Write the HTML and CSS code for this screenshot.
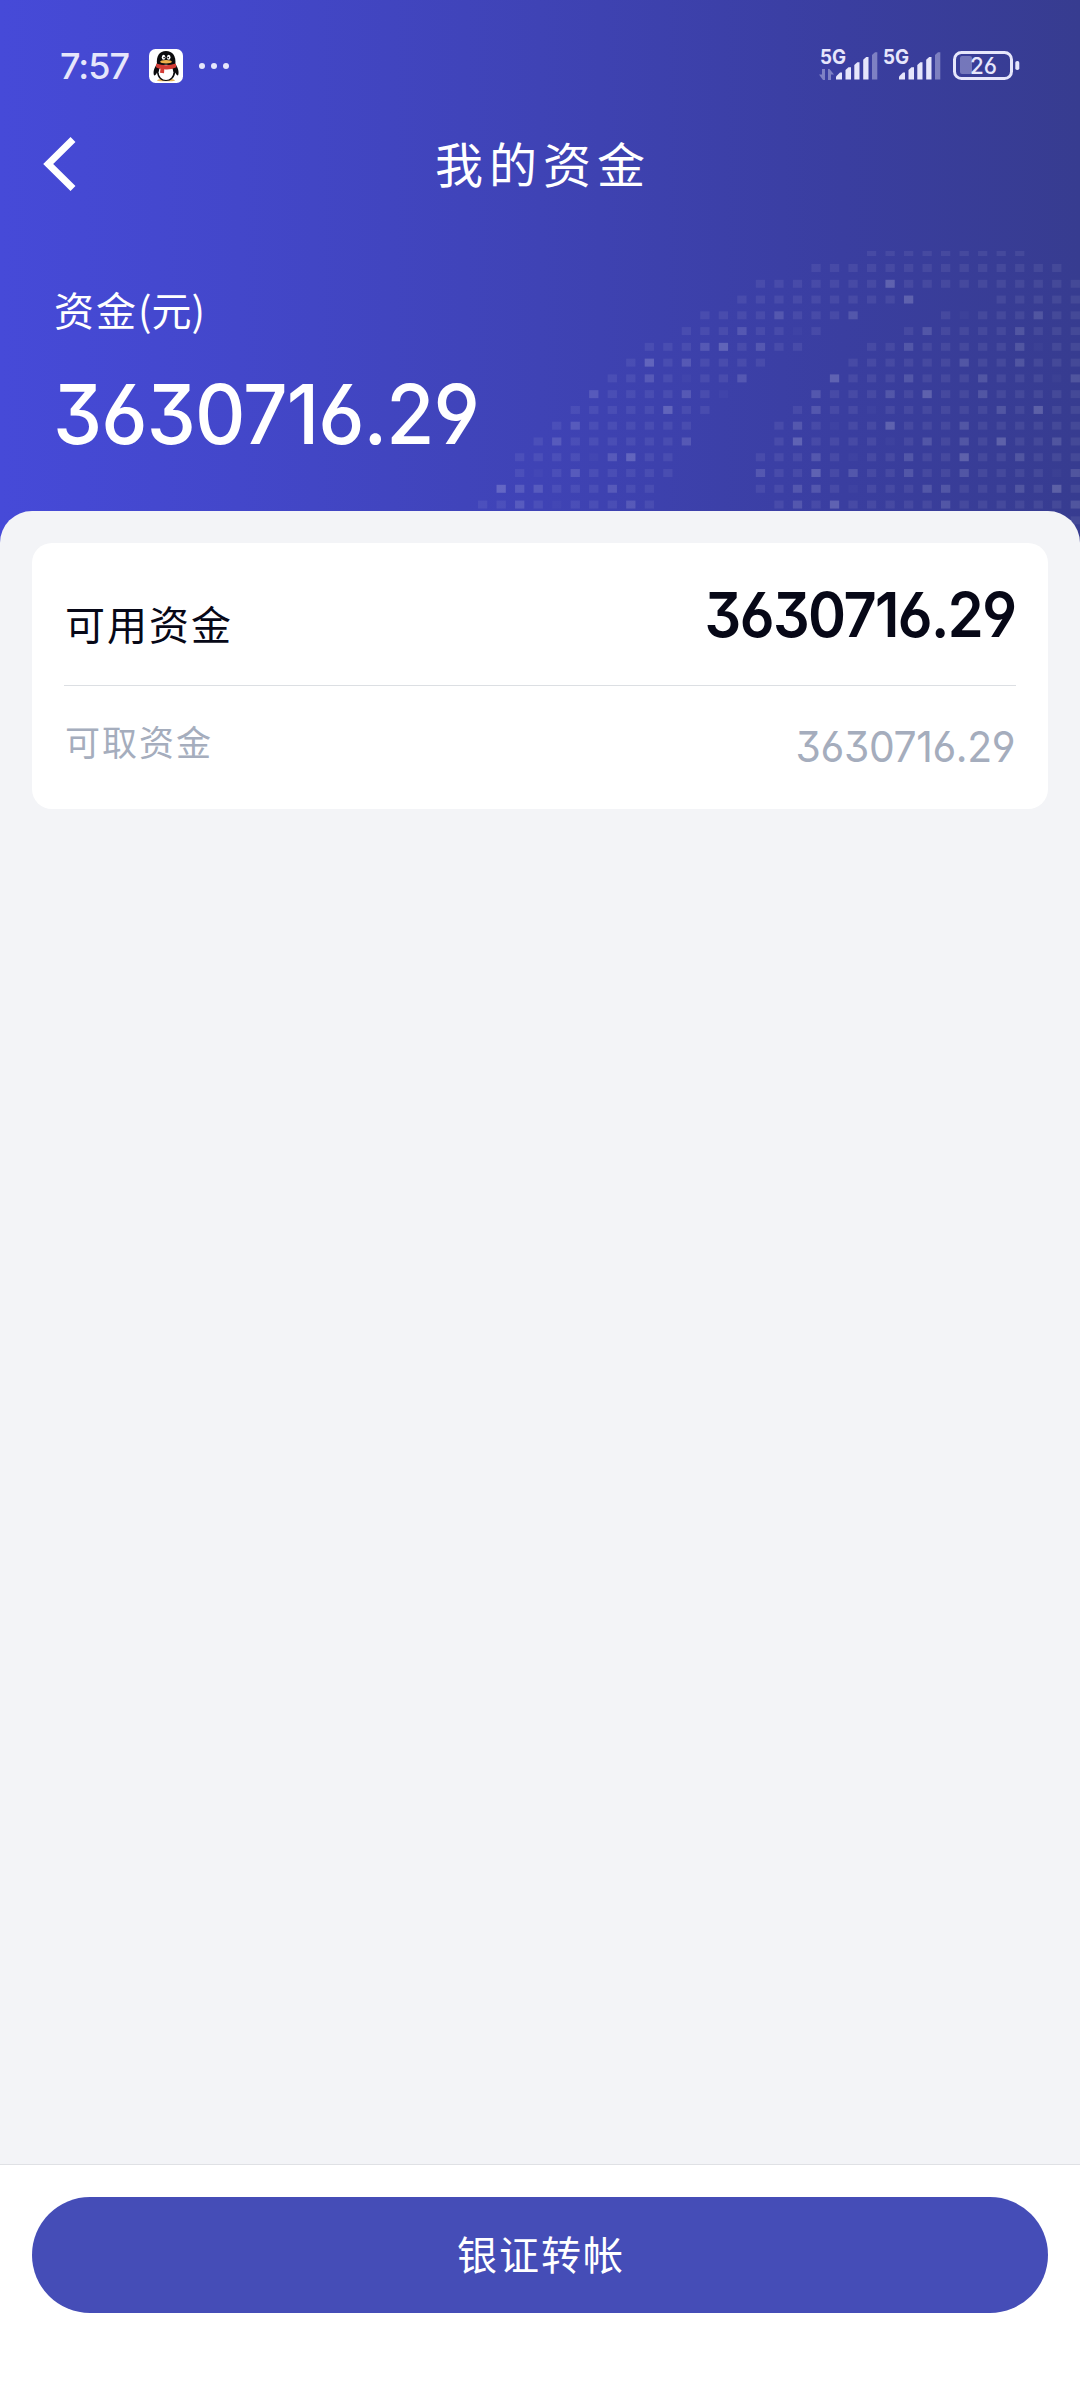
FILE: index.html
```html
<!DOCTYPE html>
<html lang="zh-CN">
<head>
<meta charset="utf-8">
<title>我的资金</title>
<link rel="stylesheet" href="styles.css">
</head>
<body>
<div class="screen">
  <header class="hero">
    <svg class="dots" id="dots" width="1080" height="543" viewBox="0 0 1080 543" aria-hidden="true"></svg>
    <div class="status">
      <span class="clock">7:57</span>
      <svg class="qq" width="34" height="34" viewBox="0 0 34 34">
        <rect width="34" height="34" rx="6.5" fill="#fff"/>
        <path d="M8 31.2q3-2.4 8.500-1l1 0q6-1.400 8.500 1q0 1.300-8.500 1q-9.500.3-9.500-1z" fill="#e8b45a"/>
        <path d="M8 15C4.800 19 3.800 24 5.200 26.500C6.300 26.500 7.600 24.600 8 23.500C8.500 28.500 12 32 17 32S25.800 28.500 26.200 23.500C26.700 24.600 28 26.500 29 26.500C30.300 24 29.500 19 26.300 15z" fill="#0b0b0d"/>
        <ellipse cx="17" cy="23.300" rx="7.400" ry="7.700" fill="#fff"/>
        <path d="M8 15.500C7 7 10.500 2 17 2S27.300 7 26.300 15.500z" fill="#0b0b0d"/>
        <ellipse cx="14.600" cy="8.300" rx="1.800" ry="2.500" fill="#fff"/><ellipse cx="19.700" cy="8.300" rx="1.800" ry="2.500" fill="#fff"/>
        <circle cx="15.100" cy="8.600" r=".8" fill="#000"/><circle cx="19.200" cy="8.600" r=".8" fill="#000"/>
        <ellipse cx="17" cy="12.800" rx="5.800" ry="1.700" fill="#efb04c"/>
        <path d="M7.300 14.500Q17 18 26.800 14.500L27.300 18.300Q21 21.200 15.300 20.300L15 24.300L11 23.800L11.500 19.800Q9 19.400 7 18.300z" fill="#d33b35"/>
      </svg>
      <svg class="more" width="30" height="6" viewBox="0 0 30 6"><g fill="#e6e6fb"><circle cx="3" cy="3" r="3"/><circle cx="15" cy="3" r="3"/><circle cx="27" cy="3" r="3"/></g></svg>
      <svg class="indicators" width="202" height="48" viewBox="818 40 202 48">
        <g fill="#e6e6fb">
          <text class="net" x="820" y="64" textLength="26" lengthAdjust="spacingAndGlyphs">5G</text>
          <text class="net" x="883" y="64" textLength="26" lengthAdjust="spacingAndGlyphs">5G</text>
          <g opacity=".4"><path d="M822 69h3v11h-2l-4-5.500h3zM828 80V69h1.500l4.500 5.500h-3V80z"/></g>
          <g id="bars">
            <path d="M836 79.500v-3l4-4h2v7z"/>
            <path d="M845.500 79.500v-9.500l3-2.700h2.500v12.200z"/>
            <path d="M854.300 79.500v-14.500l3-2.700h2.200v17.200z"/>
            <path d="M863.200 79.500v-19.800l3-2.700h2.300v22.500z"/>
            <path opacity=".4" d="M872 79.500v-24.500l3-2.700h2.300v27.200z"/>
          </g>
          <use href="#bars" x="63"/>
          <rect x="960" y="56" width="12" height="18" rx="2" opacity=".35"/>
          <rect x="1015.300" y="61" width="4" height="9" rx="1.800"/>
          <text class="level" x="970" y="74.300" textLength="27" lengthAdjust="spacingAndGlyphs">26</text>
        </g>
        <rect x="954.500" y="52.500" width="57" height="26" rx="7" fill="none" stroke="#e6e6fb" stroke-width="3"/>
      </svg>
    </div>
    <div class="nav">
      <svg class="back" width="34" height="56" viewBox="0 0 34 56"><path d="M31 3.500L6.200 28L31 52.500" fill="none" stroke="#fff" stroke-width="7"/></svg>
      <h1 class="title">我的资金</h1>
    </div>
    <p class="caption">资金<span class="unit">(元)</span></p>
    <p class="total num">3630716.29</p>
  </header>
  <main class="sheet">
    <section class="card">
      <div class="row row-main"><span class="label">可用资金</span><span class="num value">3630716.29</span></div>
      <div class="row row-sub"><span class="label">可取资金</span><span class="num value">3630716.29</span></div>
    </section>
  </main>
  <footer class="bar"><button class="action" type="button">银证转帐</button></footer>
</div>
<script src="dots.js"></script>
</body>
</html>
```
FILE: styles.css
```css
* { box-sizing: border-box; }
body {
  margin: 0;
  font-family: "Noto Sans", "Noto Sans CJK SC", sans-serif;
}
.screen {
  width: 1080px;
  height: 2400px;
  display: flex;
  flex-direction: column;
  background: #f3f4f7;
  overflow: hidden;
}
.num {
  font-family: Inter, Lato, sans-serif;
  font-feature-settings: "cv03", "cv04", "cv09";
  white-space: nowrap;
}
.hero {
  position: relative;
  height: 543px;
  flex: none;
  color: #fff;
  background: linear-gradient(90deg, #464ad8 0%, #4347ca 22%, #3f43b5 50%, #3a3ea0 78%, #373c90 100%);
}
.dots { position: absolute; left: 0; top: 0; }
.dots .l1 { opacity: .025; }
.dots .l2 { opacity: .065; }
.dots .l3 { opacity: .13; }
.dots .l4 { opacity: .19; }
.status {
  position: relative;
  height: 120px;
  padding: 12px 60px 0 60px;
  display: flex;
  align-items: center;
}
.clock {
  width: 89px;
  font: 500 36px/40px Inter, sans-serif;
  letter-spacing: -1px;
  color: #e6e6fb;
}
.more { margin-left: 16px; }
.indicators { margin: -4px 0 0 auto; overflow: visible; }
.net { font: 700 20.500px Inter, sans-serif; }
.level { font: 500 23.500px Inter, sans-serif; font-feature-settings: "cv03"; }
.nav {
  position: relative;
  height: 90px;
  display: flex;
  align-items: center;
  justify-content: center;
}
.back { position: absolute; left: 42px; top: 16px; }
.title {
  margin: 0;
  padding: 0 0 6px 6px;
  font: 400 48px/70px "Noto Sans CJK SC", sans-serif;
  letter-spacing: 6px;
}
.caption {
  position: relative;
  margin: 69px 0 0 54px;
  font: 400 40px/60px "Noto Sans CJK SC", sans-serif;
  letter-spacing: 2px;
}
.unit { letter-spacing: 0; }
.total {
  position: relative;
  margin: 26px 0 0 53px;
  font-weight: 500;
  font-size: 82px;
  line-height: 100px;
  letter-spacing: -1px;
  transform: scaleX(.954);
  transform-origin: left;
}
.sheet {
  position: relative;
  flex: 1;
  margin-top: -32px;
  padding: 32px 32px 0;
  border-radius: 32px 32px 0 0;
  background: #f3f4f7;
}
.card {
  height: 266px;
  padding: 0 32px;
  border-radius: 20px;
  background: #fff;
}
.row {
  display: flex;
  align-items: center;
  justify-content: space-between;
  font-family: "Noto Sans CJK SC", sans-serif;
}
.row .label { padding-left: 1px; }
.row .value { padding-right: 1px; transform-origin: right; }
.row-main {
  height: 143px;
  border-bottom: 1px solid #dcdfe3;
  font-size: 40px;
  letter-spacing: 2px;
  color: #070817;
}
.row-main .label { padding-top: 17px; }
.row-main .value {
  font-size: 62px;
  font-weight: 600;
  letter-spacing: -1.700px;
  transform: scaleX(.93);
}
.row-sub {
  height: 122px;
  font-size: 35px;
  letter-spacing: 2px;
  color: #a5adbd;
}
.row-sub .label { padding-bottom: 13px; }
.row-sub .value {
  padding-bottom: 3px;
  font-size: 43px;
  font-weight: 400;
  letter-spacing: -.4px;
  transform: scaleX(.95);
}
.bar {
  height: 236px;
  flex: none;
  padding: 32px 32px 0;
  border-top: 1px solid #dfe1e5;
  background: #fff;
}
.action {
  display: block;
  width: 100%;
  height: 116px;
  padding: 0 0 4px 2px;
  border: 0;
  border-radius: 58px;
  background: #454db7;
  color: #fff;
  font: 400 40px/60px "Noto Sans CJK SC", sans-serif;
  letter-spacing: 2px;
}
```
FILE: dots.js
```js
// Tiles of the header map, row by row: [first column, brightness of each tile].
const rows = [
  [[21, "222222222"]],
  [[18, "22222222222222"]],
  [[15, "222222242222222222"]],
  [[14, "2222222224"], [28, "22222"]],
  [[12, "222232223"], [25, "21222322"]],
  [[11, "22232212"], [23, "2322223222"]],
  [[9, "222342322"], [21, "223222223122"]],
  [[8, "24232222"], [20, "2222223223222"]],
  [[7, "22321223"], [19, "42223222322213"]],
  [[6, "32222321"], [18, "322232422322222"]],
  [[5, "22222422"], [17, "2322122222232422"]],
  [[4, "23222222"], [16, "23212242223222222"]],
  [[3, "232222223"], [16, "24222212323242232"]],
  [[2, "222213422"], [15, "222321223224223222"]],
  [[2, "212322222"], [15, "322423223223222213"]],
  [[1, "433222322"], [15, "223321222332223242"]],
  [[0, "2232122232"], [16, "23242222232222223"]],
  [[32, "2"]]
];
const svg = document.getElementById("dots");
rows.forEach((runs, r) => runs.forEach(([start, cells]) => {
  [...cells].forEach((level, i) => {
    const tile = document.createElementNS("http://www.w3.org/2000/svg", "rect");
    tile.setAttribute("class", "l" + level);
    tile.setAttribute("x", 478 + 18.52 * (start + i));
    tile.setAttribute("y", r ? 264 + 15.77 * (r - 1) : 251);
    tile.setAttribute("width", 9.3);
    tile.setAttribute("height", r ? 8 : 5);
    tile.setAttribute("fill", "#fff");
    svg.append(tile);
  });
}));
```
